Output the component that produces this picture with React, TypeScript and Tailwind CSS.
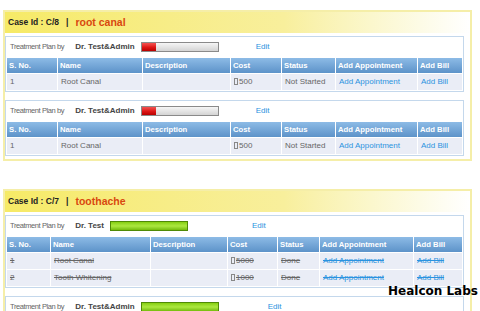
import React from 'react';

type Row = { sno: string; name: string; cost: string; status: string };

type Plan = {
  doctor: string;
  bar: 'red' | 'green';
  editGap: string;
  cols: string[];
  done: boolean;
  rows: Row[];
};

type Case = { id: string; title: string; plans: Plan[] };

const colsA = ['w-[50px]', 'w-[84px]', 'w-[87px]', 'w-[50px]', 'w-[53px]', 'w-[81px]', 'w-[44px]'];
const colsB = ['w-[43px]', 'w-[99px]', 'w-[76px]', 'w-[49px]', 'w-[41px]', 'w-[93px]', 'w-[48px]'];

const headings = ['S. No.', 'Name', 'Description', 'Cost', 'Status', 'Add Appointment', 'Add Bill'];

const cases: Case[] = [
  {
    id: 'C/8',
    title: 'root canal',
    plans: [
      {
        doctor: 'Dr. Test&Admin',
        bar: 'red',
        editGap: 'ml-[37px]',
        cols: colsA,
        done: false,
        rows: [{ sno: '1', name: 'Root Canal', cost: '500', status: 'Not Started' }],
      },
      {
        doctor: 'Dr. Test&Admin',
        bar: 'red',
        editGap: 'ml-[37px]',
        cols: colsA,
        done: false,
        rows: [{ sno: '1', name: 'Root Canal', cost: '500', status: 'Not Started' }],
      },
    ],
  },
  {
    id: 'C/7',
    title: 'toothache',
    plans: [
      {
        doctor: 'Dr. Test',
        bar: 'green',
        editGap: 'ml-[64px]',
        cols: colsB,
        done: true,
        rows: [
          { sno: '1', name: 'Root Canal', cost: '5000', status: 'Done' },
          { sno: '2', name: 'Tooth Whitening', cost: '1000', status: 'Done' },
        ],
      },
      {
        doctor: 'Dr. Test&Admin',
        bar: 'green',
        editGap: 'ml-[49px]',
        cols: colsA,
        done: true,
        rows: [{ sno: '1', name: 'Root Canal', cost: '500', status: 'Done' }],
      },
    ],
  },
];

const ProgressBar: React.FC<{ kind: 'red' | 'green' }> = ({ kind }) =>
  kind === 'red' ? (
    <div className="flex w-[78px] h-[10px] border border-[#8a8a8a] bg-linear-to-b from-[#f6f6f6] to-[#d4d4d4]">
      <div className="w-[14px] h-full bg-linear-to-b from-[#f25050] via-[#e01818] to-[#b80000]" />
    </div>
  ) : (
    <div className="w-[78px] h-[10px] border border-[#4f8a06] bg-linear-to-b from-[#86cf0c] via-[#ace83e] to-[#74bc06]" />
  );

const PlanBox: React.FC<{ plan: Plan }> = ({ plan }) => {
  const strike = plan.done ? 'line-through' : '';
  return (
    <div className="w-[459px] border border-[#c4d8ec] bg-white">
      <div className="flex items-center h-[20px] pl-[4px]">
        <span className="text-[7.5px] tracking-[-0.4px] text-[#666]">Treatment Plan by</span>
        <span className="ml-[11px] text-[8px] font-bold text-[#444]">{plan.doctor}</span>
        <div className="ml-[6px]">
          <ProgressBar kind={plan.bar} />
        </div>
        <a className={`${plan.editGap} text-[8px] text-[#2a93e0]`}>Edit</a>
      </div>
      <table className="w-[457px] table-fixed border-separate border-spacing-x-[1px] border-spacing-y-[1px]">
        <thead>
          <tr>
            {headings.map((h, i) => (
              <th
                key={h}
                className={`${plan.cols[i]} h-[15px] px-[2px] text-left text-[7.7px] font-bold leading-none text-white bg-linear-to-b from-[#8dbbe6] to-[#5d93c9] whitespace-nowrap`}
              >
                {h}
              </th>
            ))}
          </tr>
        </thead>
        <tbody>
          {plan.rows.map((r) => (
            <tr key={r.sno} className="text-[8px] leading-none">
              <td className={`h-[16px] px-[3px] bg-[#eaedf6] text-[#666] ${strike}`}>{r.sno}</td>
              <td className={`px-[3px] bg-[#eaedf6] text-[#666] whitespace-nowrap ${strike}`}>{r.name}</td>
              <td className="px-[3px] bg-[#eaedf6]"></td>
              <td className={`px-[3px] bg-[#eaedf6] text-[#666] ${strike}`}>
                <span className="inline-block w-[4px] h-[7px] mr-[1px] border border-[#888] align-[-1px]" />
                {r.cost}
              </td>
              <td className={`px-[3px] bg-[#eaedf6] text-[#666] whitespace-nowrap ${strike}`}>{r.status}</td>
              <td className={`px-[3px] bg-[#eaedf6] text-[#2a93e0] whitespace-nowrap ${strike}`}>Add Appointment</td>
              <td className={`px-[3px] bg-[#eaedf6] text-[#2a93e0] whitespace-nowrap ${strike}`}>Add Bill</td>
            </tr>
          ))}
        </tbody>
      </table>
    </div>
  );
};

const CaseCard: React.FC<{ item: Case }> = ({ item }) => (
  <div className="ml-[3px] w-[469px] border-2 border-[#f5eea8] pb-[3px]">
    <div className="flex items-center h-[21px] pl-[3px] bg-linear-to-r from-[#f6ea66] via-[#f8ef9c] via-60% to-white">
      <span className="text-[8.5px] font-bold text-[#222]">Case Id : {item.id}</span>
      <span className="ml-[7px] text-[8.5px] font-bold text-[#222]">|</span>
      <span className="ml-[7px] text-[10.5px] font-bold text-[#d9480f]">{item.title}</span>
    </div>
    <div className="flex flex-col gap-[8px] mt-[3px]">
      {item.plans.map((p, i) => (
        <PlanBox key={i} plan={p} />
      ))}
    </div>
  </div>
);

export default function App() {
  return (
    <div
      className="relative w-[480px] h-[311px] overflow-hidden bg-white pt-[10px]"
      style={{ fontFamily: '"Liberation Sans", Arial, sans-serif' }}
    >
      <div className="flex flex-col gap-[28px]">
        {cases.map((c) => (
          <CaseCard key={c.id} item={c} />
        ))}
      </div>
      <div
        className="absolute top-[285px] left-[388px] text-[12px] font-bold leading-none text-black"
        style={{ fontFamily: '"DejaVu Sans", sans-serif' }}
      >
        Healcon Labs
      </div>
    </div>
  );
}
